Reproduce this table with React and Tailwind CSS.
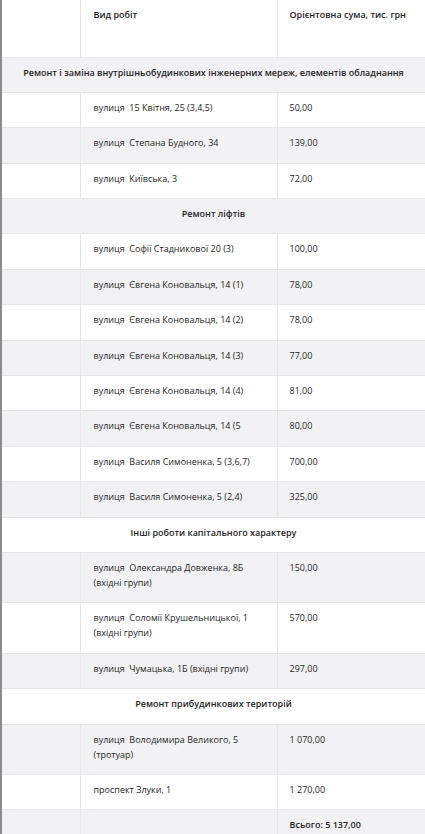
const SECTIONS = [
  {
    title: 'Ремонт і заміна внутрішньобудинкових інженерних мереж, елементів обладнання',
    rows: [
      ['вулиця  15 Квітня, 25 (3,4,5)', '50,00'],
      ['вулиця  Степана Будного, 34', '139,00'],
      ['вулиця  Київська, 3', '72,00'],
    ],
  },
  {
    title: 'Ремонт ліфтів',
    rows: [
      ['вулиця  Софії Стадникової 20 (3)', '100,00'],
      ['вулиця  Євгена Коновальця, 14 (1)', '78,00'],
      ['вулиця  Євгена Коновальця, 14 (2)', '78,00'],
      ['вулиця  Євгена Коновальця, 14 (3)', '77,00'],
      ['вулиця  Євгена Коновальця, 14 (4)', '81,00'],
      ['вулиця  Євгена Коновальця, 14 (5', '80,00'],
      ['вулиця  Василя Симоненка, 5 (3,6,7)', '700,00'],
      ['вулиця  Василя Симоненка, 5 (2,4)', '325,00'],
    ],
  },
  {
    title: 'Інші роботи капітального характеру',
    rows: [
      ['вулиця  Олександра Довженка, 8Б (вхідні групи)', '150,00'],
      ['вулиця  Соломії Крушельницької, 1 (вхідні групи)', '570,00'],
      ['вулиця  Чумацька, 1Б (вхідні групи)', '297,00'],
    ],
  },
  {
    title: 'Ремонт прибудинкових територій',
    rows: [
      ['вулиця  Володимира Великого, 5 (тротуар)', '1 070,00'],
      ['проспект Злуки, 1', '1 270,00'],
    ],
  },
];

const cell = 'pt-[7px] pb-[12.4px] leading-[15px] align-top border-b border-[#e6e6e6]';

export default function App() {
  // flatten sections into striped rows
  const body = [];
  SECTIONS.forEach((s) => {
    body.push({ type: 'section', title: s.title });
    s.rows.forEach(([addr, sum]) => body.push({ type: 'row', addr, sum }));
  });
  body.push({ type: 'total' });

  return (
    <div
      className="w-[425px] h-[834px] overflow-hidden bg-white border-l-2 border-[#8c8c8c] text-[9px] text-[#1e1e1e]"
      style={{ fontFamily: '"Open Sans", "Noto Sans", sans-serif' }}
    >
      <table className="w-full table-fixed border-collapse">
        <colgroup>
          <col className="w-[78px]" />
          <col className="w-[197px]" />
          <col />
        </colgroup>
        <thead>
          <tr className="h-[57px] bg-white">
            <th className={`${cell} border-r`} />
            <th className={`${cell} border-r text-left font-semibold pl-[13px]`}>Вид робіт</th>
            <th className={`${cell} text-left font-semibold pl-[12px]`}>Орієнтовна сума, тис. грн</th>
          </tr>
        </thead>
        <tbody>
          {body.map((r, i) => {
            const bg = i % 2 === 0 ? 'bg-[#f2f2f4]' : 'bg-white';
            if (r.type === 'section') {
              return (
                <tr key={i} className={bg}>
                  <td colSpan={3} className={`${cell} text-center font-semibold whitespace-nowrap`}>
                    {r.title}
                  </td>
                </tr>
              );
            }
            if (r.type === 'total') {
              return (
                <tr key={i} className={bg}>
                  <td className={`${cell} border-r`} />
                  <td className={`${cell} border-r`} />
                  <td className={`${cell} pl-[12px] font-semibold`}>Всього: 5 137,00</td>
                </tr>
              );
            }
            return (
              <tr key={i} className={bg}>
                <td className={`${cell} border-r`} />
                <td className={`${cell} border-r pl-[13px] pr-[4px] whitespace-pre-wrap`}>{r.addr}</td>
                <td className={`${cell} pl-[12px]`}>{r.sum}</td>
              </tr>
            );
          })}
        </tbody>
      </table>
    </div>
  );
}
